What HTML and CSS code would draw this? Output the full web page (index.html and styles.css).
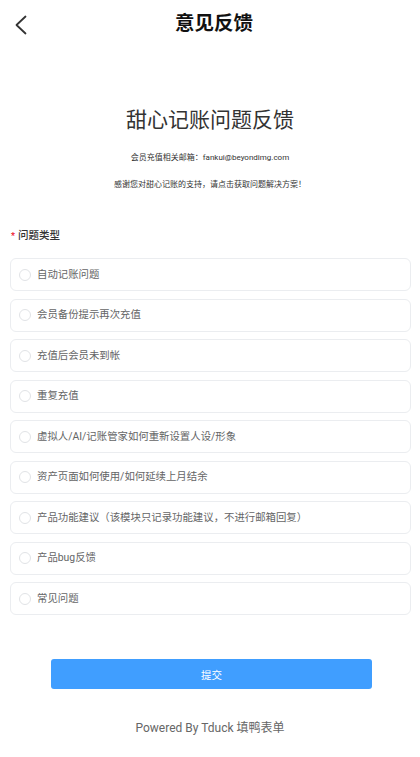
FILE: index.html
```html
<!DOCTYPE html>
<html lang="zh-CN">
<head>
<meta charset="utf-8">
<title>意见反馈</title>
<link rel="stylesheet" href="styles.css">
</head>
<body>
<div class="page">
  <header class="nav">
    <div class="nav-back">
      <svg width="14" height="20" viewBox="0 0 14 20"><path d="M11.5 1.5 L2.5 10 L11.5 18.5" fill="none" stroke="#333" stroke-width="1.8" stroke-linecap="round" stroke-linejoin="round"/></svg>
    </div>
    <div class="nav-title">意见反馈</div>
    <div></div>
  </header>

  <h1 class="heading">甜心记账问题反馈</h1>
  <p class="sub sub-email">会员充值相关邮箱：fankui@beyondimg.com</p>
  <p class="sub sub-thanks">感谢您对甜心记账的支持，请点击获取问题解决方案！</p>

  <div class="label"><span class="star">*</span>问题类型</div>

  <div class="options">
    <div class="option"><span class="radio"></span><span class="opt-text">自动记账问题</span></div>
    <div class="option"><span class="radio"></span><span class="opt-text">会员备份提示再次充值</span></div>
    <div class="option"><span class="radio"></span><span class="opt-text">充值后会员未到帐</span></div>
    <div class="option"><span class="radio"></span><span class="opt-text">重复充值</span></div>
    <div class="option"><span class="radio"></span><span class="opt-text">虚拟人/AI/记账管家如何重新设置人设/形象</span></div>
    <div class="option"><span class="radio"></span><span class="opt-text">资产页面如何使用/如何延续上月结余</span></div>
    <div class="option"><span class="radio"></span><span class="opt-text">产品功能建议（该模块只记录功能建议，不进行邮箱回复）</span></div>
    <div class="option"><span class="radio"></span><span class="opt-text">产品bug反馈</span></div>
    <div class="option"><span class="radio"></span><span class="opt-text">常见问题</span></div>
  </div>

  <button class="submit">提交</button>

  <div class="footer">Powered By Tduck 填鸭表单</div>
</div>
</body>
</html>
```

FILE: styles.css
```css
* { box-sizing: border-box; }
html, body {
  margin: 0;
  padding: 0;
  background: #fff;
}
body {
  font-family: Roboto, "Noto Sans CJK SC", "Noto Sans", sans-serif;
  color: #333;
}
.page {
  width: 420px;
  display: flex;
  flex-direction: column;
}
.nav {
  height: 48px;
  display: grid;
  grid-template-columns: 64px 1fr 56px;
  align-items: center;
}
.nav-back {
  padding-left: 14px;
  padding-top: 2px;
  display: flex;
  align-items: center;
}
.nav-title {
  text-align: center;
  font-size: 19.5px;
  font-weight: 700;
  color: #111;
  line-height: 26px;
}
.heading {
  margin: 57px 0 0;
  font-size: 21px;
  line-height: 30px;
  font-weight: 400;
  text-align: center;
  color: #333;
}
.sub {
  margin: 0;
  font-size: 8px;
  line-height: 12px;
  text-align: center;
  color: #333;
}
.sub-email { margin-top: 17px; }
.sub-thanks { margin-top: 15px; }
.label {
  margin: 38px 0 0 11px;
  font-size: 10.5px;
  line-height: 14px;
  font-weight: 500;
  color: #323233;
  display: flex;
  align-items: center;
}
.star {
  color: #ee0a24;
  font-size: 9px;
  margin-right: 3px;
  width: 4px;
}
.options {
  margin-top: 15px;
  padding: 0 9px 0 10px;
  display: flex;
  flex-direction: column;
  gap: 7.5px;
}
.option {
  height: 33px;
  border: 1px solid #ebedf0;
  border-radius: 6px;
  display: flex;
  align-items: center;
  padding-left: 8px;
}
.radio {
  width: 12px;
  height: 12px;
  border: 1px solid #e1e3e6;
  border-radius: 50%;
  flex: none;
}
.opt-text {
  margin-left: 6px;
  font-size: 10.4px;
  color: #646566;
  line-height: 14px;
}
.submit {
  margin: 44px 48px 0 51px;
  height: 30px;
  border: none;
  border-radius: 3px;
  background: #409eff;
  color: #fff;
  font-family: Roboto, "Noto Sans CJK SC", sans-serif;
  font-size: 10.5px;
  padding: 0;
}
.footer {
  margin-top: 31px;
  text-align: center;
  font-size: 12px;
  line-height: 16px;
  color: #666;
}
```
